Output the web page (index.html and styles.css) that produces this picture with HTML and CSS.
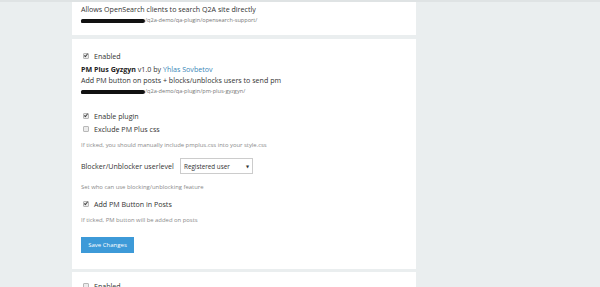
FILE: index.html
```html
<!DOCTYPE html>
<html>
<head>
    <title>Plugins - Admin</title>
    <link rel="stylesheet" href="styles.css">
</head>
<body>
    <div class="page">
        <div class="main">
            <div class="panel panel-first">
                <div class="desc">Allows OpenSearch clients to search Q2A site directly</div>
                <div class="path"><span class="redact"></span>/q2a-demo/qa-plugin/opensearch-support/</div>
            </div>

            <div class="panel panel-plugin">
                <label class="check row-enabled"><span class="cb checked"></span>Enabled</label>
                <div class="title"><b>PM Plus Gyzgyn</b> v1.0 by <a href="#">Yhlas Sovbetov</a></div>
                <div class="desc">Add PM button on posts + blocks/unblocks users to send pm</div>
                <div class="path"><span class="redact"></span>/q2a-demo/qa-plugin/pm-plus-gyzgyn/</div>

                <label class="check row-option"><span class="cb checked"></span>Enable plugin</label>
                <label class="check row-option2"><span class="cb"></span>Exclude PM Plus css</label>
                <div class="note">If ticked, you should manually include pmplus.css into your style.css</div>

                <div class="field">
                    <span class="field-label">Blocker/Unblocker userlevel</span>
                    <span class="select">Registered user<span class="arrow">&#9660;</span></span>
                </div>
                <div class="note">Set who can use blocking/unblocking feature</div>

                <label class="check row-option3"><span class="cb checked"></span>Add PM Button in Posts</label>
                <div class="note">If ticked, PM button will be added on posts</div>

                <button class="save">Save Changes</button>
            </div>

            <div class="panel panel-last">
                <label class="check row-enabled"><span class="cb"></span>Enabled</label>
            </div>
        </div>
    </div>
</body>
</html>
```

FILE: styles.css
```css
body {
    margin: 0;
    background-color: #eaeeef;
    font-family: "Open Sans", "DejaVu Sans", sans-serif;
    color: #333;
    overflow: hidden;
}

.page {
    border-top: 2px solid #dfe3e4;
}

.main {
    margin-left: 72px;
    width: 344px;
}

.panel {
    background-color: #fff;
    padding: 0 9px;
    margin-bottom: 3px;
}

.panel-first {
    box-sizing: border-box;
    height: 33px;
    padding-top: 1px;
}

.panel-plugin {
    padding-top: 11px;
    padding-bottom: 16px;
    margin-top: 4px;
}

.panel-last {
    padding-top: 8px;
    height: 20px;
}

.desc {
    font-size: 7.1px;
    line-height: 11px;
    color: #333;
}

.panel-first .desc {
    line-height: 12px;
}

.path {
    font-size: 5.6px;
    line-height: 11px;
    color: #777;
    display: flex;
    align-items: center;
}

.redact {
    display: inline-block;
    width: 64px;
    height: 4px;
    background-color: #111;
    border-radius: 3px 4px 4px 2px;
    margin-top: 1px;
}

.title {
    font-size: 7.1px;
    line-height: 11px;
    margin-top: 2px;
}

.title b {
    color: #222;
}

.title a {
    color: #3a87b8;
    text-decoration: none;
}

.check {
    display: flex;
    align-items: center;
    font-size: 7.1px;
    line-height: 12px;
    height: 12px;
    padding-left: 2px;
}

.row-option {
    margin-top: 13px;
}

.row-option2 {
    margin-top: 1px;
}

.row-option3 {
    margin-top: 6px;
}

.cb {
    width: 4px;
    height: 4px;
    border: 1px solid #b8b8b8;
    background-color: #ececec;
    border-radius: 1px;
    margin-right: 5px;
    position: relative;
}

.cb.checked::after {
    content: "";
    position: absolute;
    left: 1px;
    top: -1px;
    width: 1px;
    height: 3px;
    border: solid #444;
    border-width: 0 1px 1px 0;
    transform: rotate(40deg);
}

.note {
    font-size: 5.9px;
    line-height: 10px;
    color: #8a8a8a;
    margin-top: 5px;
}

.field {
    display: flex;
    align-items: center;
    height: 16px;
    margin-top: 8px;
}

.field + .note {
    margin-top: 8px;
}

.field-label {
    font-size: 7.1px;
    color: #333;
    width: 99px;
}

.select {
    box-sizing: border-box;
    width: 73px;
    height: 16px;
    border: 1px solid #ccc;
    font-size: 6.3px;
    color: #333;
    display: flex;
    align-items: center;
    justify-content: space-between;
    padding: 0 3px 0 3px;
}

.arrow {
    font-size: 4px;
}

.save {
    display: block;
    margin-top: 12px;
    width: 53px;
    height: 16px;
    border: none;
    background-color: #3d9ad8;
    color: #fff;
    font-family: "Open Sans", "DejaVu Sans", sans-serif;
    font-size: 6px;
    padding: 0;
}
```
